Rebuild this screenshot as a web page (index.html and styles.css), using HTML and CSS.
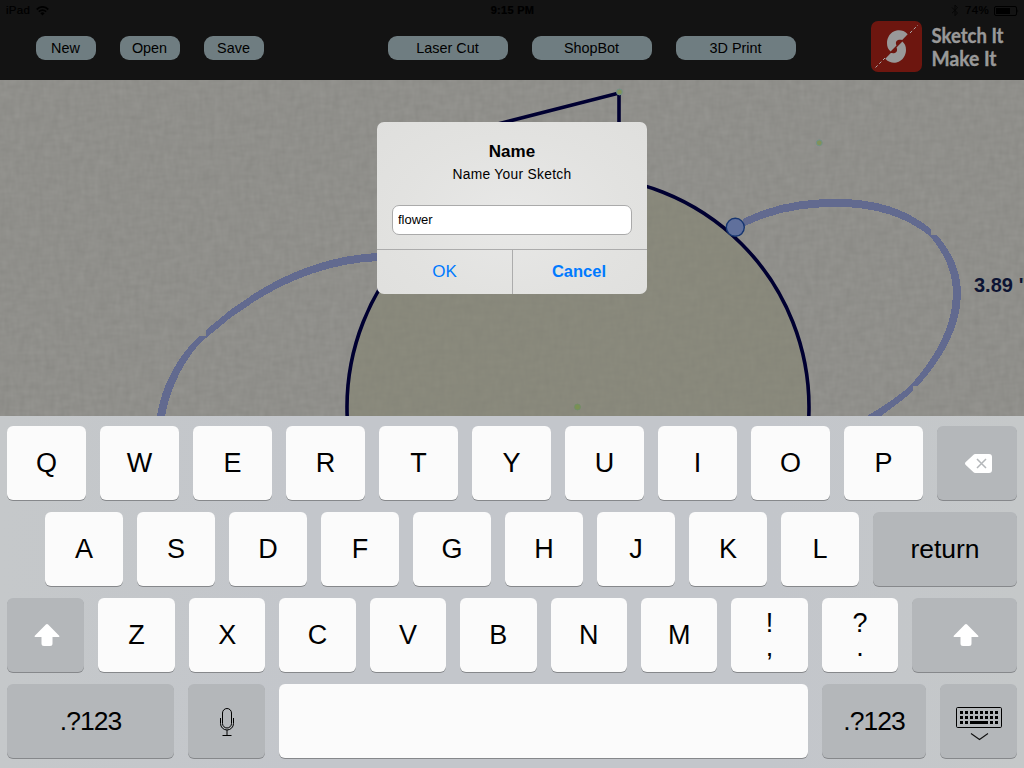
FILE: index.html
```html
<!DOCTYPE html>
<html lang="en">
<head>
<meta charset="utf-8">
<title>Sketch It Make It</title>
<link rel="stylesheet" href="styles.css">
</head>
<body>
<div class="screen">
  <header class="header">
    <div class="status">
      <div class="status-left"><span>iPad</span>
        <svg width="13" height="10" viewBox="0 0 13 10" fill="none" stroke="#000" stroke-width="1.7"><path d="M.7 3.5Q6.5-1.8 12.3 3.5M2.8 5.7Q6.5 2.5 10.2 5.7"/><path d="M4.4 7.2Q6.5 5.5 8.6 7.2L6.5 9.5z" fill="#000" stroke="none"/></svg>
      </div>
      <div class="status-time">9:15 PM</div>
      <div class="status-right">
        <svg width="8" height="13" viewBox="0 0 8 13" fill="none" stroke="#060606"><path d="M1 3.5 6.5 9 4 11.7V1L6.5 3.8 1 9.2"/></svg>
        <span>74%</span>
        <svg width="25" height="10" viewBox="0 0 25 10"><rect x=".5" y=".5" width="22" height="9" rx="1.5" fill="none" stroke="#000"/><rect x="2" y="2" width="14" height="6" fill="#000"/><path d="M23.5 3Q25 5 23.5 7z"/></svg>
      </div>
    </div>
    <div class="toolbar">
      <nav class="group files"><button class="pill">New</button><button class="pill">Open</button><button class="pill">Save</button></nav>
      <nav class="group outputs"><button class="pill wide">Laser Cut</button><button class="pill wide">ShopBot</button><button class="pill wide">3D Print</button></nav>
      <svg class="brand" width="140" height="52" viewBox="0 0 140 52">
        <rect width="51" height="51" rx="7" fill="#6d160f"/>
        <path d="M36.7 13.3C33 9.3 29 9 25.5 9.6C19 11 16 17 16 22C16 26 17.2 28.3 19.6 30.4L25.5 24.5C24.2 21.5 25.2 19.3 28 18.8C29.2 18.6 30.2 18.9 31.2 18.9z" fill="#999"/>
        <path d="M14.3 37.7C18 41.7 22 42 25.5 41.4C32 40 35 34 35 29C35 25 33.8 22.7 31.4 20.6L25.5 26.5C26.8 29.5 25.8 31.7 23 32.2C21.8 32.4 20.8 32.1 19.8 32.1z" fill="#999"/>
        <path d="M4.5 46.5 14 37M39 12 47 4" stroke="#aaa" stroke-width="1" stroke-dasharray="3 2.3"/>
        <text class="brand-text" x="60.5" y="22" textLength="72" lengthAdjust="spacingAndGlyphs">Sketch It</text>
        <text class="brand-text" x="60.5" y="44.5" textLength="65" lengthAdjust="spacingAndGlyphs">Make It</text>
      </svg>
    </div>
  </header>

  <main class="canvas">
    <svg class="drawing" width="1024" height="336" viewBox="0 80 1024 336">
      <defs>
        <filter id="linen" x="0" y="0" width="100%" height="100%" color-interpolation-filters="sRGB">
          <feTurbulence type="fractalNoise" baseFrequency=".07 .2" numOctaves="2" seed="4" result="a"/>
          <feColorMatrix in="a" values=".07 0 0 0 .527  .07 0 0 0 .525  .07 0 0 0 .508  0 0 0 0 1" result="weft"/>
          <feTurbulence type="fractalNoise" baseFrequency=".2 .07" numOctaves="2" seed="9" result="b"/>
          <feColorMatrix in="b" values=".07 0 0 0 .527  .07 0 0 0 .525  .07 0 0 0 .508  0 0 0 0 1" result="warp"/>
          <feComposite in="weft" in2="warp" operator="arithmetic" k2=".5" k3=".5"/>
        </filter>
      </defs>
      <rect y="80" width="1024" height="336" filter="url(#linen)"/>
      <circle cx="578" cy="407" r="231" fill="#84836f" fill-opacity=".55"/>
      <g fill="#626a8f" shape-rendering="crispEdges">
        <path d="M743 219C775 203 805 199 837 199C875 199 905 208 931 229V237C905 216 875 207 837 207C805 207 775 211 743 227z"/>
        <path d="M929 235H937C954 254 961 275 961 293C961 325 944 357 918 386H910C936 357 953 325 953 293C953 275 946 254 929 235z"/>
        <path d="M913 383V391C903 400 893 407 881 416H867C886 405 903 393 913 383z"/>
        <path d="M378 253C311 256 253 288 206 330V338C253 296 311 264 378 261z"/>
        <path d="M199 336H207C184 358 170 388 165 416H157C161 388 176 358 199 336z"/>
      </g>
      <g fill="none" stroke="#000031" stroke-width="3.6">
        <circle cx="578" cy="407" r="231"/>
        <path d="M490 126 619 93V180"/>
      </g>
      <circle cx="735.3" cy="227.3" r="9" fill="#60709c" stroke="#173670" stroke-width="1.4"/>
      <g fill="#81925a" stroke="#71928a" stroke-width="1"><circle cx="619.5" cy="92" r="2.9"/><circle cx="819.3" cy="142.8" r="2.9"/><circle cx="577.5" cy="407" r="2.9" fill="#7b9052" stroke="#718e68"/></g>
      <text class="measure" x="974" y="292">3.89 "</text>
    </svg>
    <section class="alert">
      <div class="alert-body">
        <h1 class="alert-title">Name</h1>
        <p class="alert-message">Name Your Sketch</p>
        <input class="alert-input" type="text" value="flower">
      </div>
      <div class="alert-actions"><button class="action">OK</button><button class="action strong">Cancel</button></div>
    </section>
  </main>

  <section class="keyboard">
    <div class="row row-1">
      <button class="key">Q</button><button class="key">W</button><button class="key">E</button><button class="key">R</button><button class="key">T</button><button class="key">Y</button><button class="key">U</button><button class="key">I</button><button class="key">O</button><button class="key">P</button>
      <button class="key dark"><svg class="icon-delete" width="27" height="19" viewBox="0 0 27 19"><path d="M8 1.2Q9 0 10.5 0H24Q27 0 27 3V16Q27 19 24 19H10.5Q9 19 8 17.8L.5 10.7Q-.5 9.5 .5 8.3z" fill="#fff"/><path d="M12 5 21 14M21 5 12 14" stroke="#b4b7ba" stroke-width="1.5"/></svg></button>
    </div>
    <div class="row row-2">
      <button class="key">A</button><button class="key">S</button><button class="key">D</button><button class="key">F</button><button class="key">G</button><button class="key">H</button><button class="key">J</button><button class="key">K</button><button class="key">L</button>
      <button class="key dark">return</button>
    </div>
    <div class="row row-3">
      <button class="key dark"><svg class="icon-shift" width="26" height="22" viewBox="0 0 26 22"><path d="M11.9.6Q13-.4 14.1.6L25.2 11.8Q25.8 13 24.5 13H18.5V19.5Q18.5 22 16 22H10Q7.5 22 7.5 19.5V13H1.5Q.2 13 .8 11.8z" fill="#fff"/></svg></button>
      <button class="key">Z</button><button class="key">X</button><button class="key">C</button><button class="key">V</button><button class="key">B</button><button class="key">N</button><button class="key">M</button>
      <button class="key double"><span>!</span><span>,</span></button><button class="key double"><span>?</span><span>.</span></button>
      <button class="key dark"><svg class="icon-shift" width="26" height="22" viewBox="0 0 26 22"><path d="M11.9.6Q13-.4 14.1.6L25.2 11.8Q25.8 13 24.5 13H18.5V19.5Q18.5 22 16 22H10Q7.5 22 7.5 19.5V13H1.5Q.2 13 .8 11.8z" fill="#fff"/></svg></button>
    </div>
    <div class="row row-4">
      <button class="key dark digits">.?123</button>
      <button class="key dark"><svg class="icon-mic" width="14" height="28" viewBox="0 0 14 28" fill="none" stroke="#000"><rect x="2.5" y=".5" width="9" height="19.5" rx="4.5"/><path d="M.5 10V15.5A6.5 6.5 0 0 0 13.5 15.5V10M7 22V27.5M2.5 27.5H11.5"/></svg></button>
      <button class="key space" aria-label="space"></button>
      <button class="key dark digits">.?123</button>
      <button class="key dark"><svg class="icon-hide" width="46" height="34" viewBox="0 0 46 34"><rect x=".5" y=".5" width="45" height="20" rx="1.2" fill="none" stroke="#000"/><path d="M4 5.5H42M4 10.5H42" stroke="#000" stroke-width="3" stroke-dasharray="3 2"/><path d="M4 15.5H7M9 15.5H12M14 15.5H32M34 15.5H37M39 15.5H42" stroke="#000" stroke-width="3"/><path d="M15 26.5 23.5 32.5 32 26.5" fill="none" stroke="#111" stroke-width="1.1"/></svg></button>
    </div>
  </section>
</div>
</body>
</html>
```
FILE: styles.css
```css
* { box-sizing: border-box; }
body { margin: 0; font-family: "Liberation Sans", Arial, sans-serif; color: #000; }
button, input { font: inherit; color: inherit; border: 0; margin: 0; padding: 0; }
svg { display: block; flex: none; }
.screen { width: 1024px; height: 768px; display: flex; flex-direction: column; overflow: hidden; }

.header { height: 80px; background: #131313; display: flex; flex-direction: column; }
.status { height: 21px; padding: 0 5px 0 6px; display: grid; grid-template-columns: 1fr auto 1fr; align-items: center; font-size: 11.5px; line-height: 21px; -webkit-text-stroke: .2px #000; letter-spacing: .3px; }
.status-left { display: flex; align-items: center; gap: 6px; }
.status-time { font-weight: bold; font-size: 11px; }
.status-right { display: flex; align-items: center; justify-content: flex-end; gap: 6px; }
.status-right span { margin-right: -1px; }
.toolbar { height: 59px; display: flex; align-items: flex-start; }
.group { display: flex; gap: 24px; padding-top: 15px; }
.files { margin-left: 36px; }
.outputs { margin-left: 124px; }
.pill { width: 60px; height: 24px; padding-right: 1px; border-radius: 9px; background: #6f7d81; font-size: 14.4px; line-height: 23px; }
.pill.wide { width: 120px; }
.brand { margin-left: 75px; overflow: visible; }
.brand-text { font: bold 21.5px Lato, sans-serif; fill: #999; stroke: #999; stroke-width: .4px; }

.canvas { position: relative; height: 336px; background: #8f8f8a; }
.measure { font: bold 20px "Liberation Sans", Arial, sans-serif; fill: #0d1433; }

.alert { position: absolute; left: 377px; top: 42px; width: 270px; height: 172px; border-radius: 7px; overflow: hidden; background: radial-gradient(ellipse at 50% 55%, #e8e8e7, #e2e2e0 60%, #dfdfdd); display: flex; flex-direction: column; }
.alert-body { height: 127px; padding: 20px 15px 0; text-align: center; }
.alert-title { margin: 0; font-size: 17px; line-height: 20px; }
.alert-message { margin: 4px 0 0; font-size: 13.8px; line-height: 17px; letter-spacing: .3px; }
.alert-input { display: block; width: 240px; height: 30px; margin-top: 22px; padding: 0 5px 2px; border: 1px solid #aaa; border-radius: 7px; background: #fff; font-size: 13px; }
.alert-actions { height: 45px; display: grid; grid-template-columns: 135px 135px; border-top: 1px solid #acacac; }
.action { background: none; color: #007aff; font-size: 17px; padding-bottom: 1px; }
.action.strong { font-weight: bold; border-left: 1px solid #acacac; font-size: 16.5px; padding-right: 2px; }

.keyboard { height: 352px; padding: 10px 7px; display: flex; flex-direction: column; gap: 12px; background: linear-gradient(90deg, #c5c8ca, #c3c6cb 30%, #c3c6cb 75%, #c5c8c9); }
.row { display: grid; gap: 14px; height: 74px; }
.row-1 { grid-template-columns: repeat(10, 79px) 80px; }
.row-2 { grid-template-columns: repeat(9, 78px) 144px; padding-left: 38px; }
.row-3 { grid-template-columns: 77px 77px repeat(8, 76.4px) 104.8px; }
.row-4 { grid-template-columns: 167px 77px 529px 104px 77px; }
.key { display: flex; align-items: center; justify-content: center; border-radius: 6px; background: #fbfbfb; box-shadow: 0 1px 0 #86888b; font-size: 27px; line-height: 30px; padding-bottom: 1px; }
.key.dark { background: #b4b7ba; font-size: 26.5px; }
.key.digits { letter-spacing: -1px; }
.key.double { flex-direction: column; justify-content: flex-start; line-height: 26px; padding: 12px 0 0; }
.key.double span + span { margin-top: -2px; }
.icon-delete { margin: 2px 0 0 2px; }
.icon-shift { margin-left: 2px; }
.icon-mic { margin-top: 3px; }
.icon-hide { margin: 6px 0 0 1px; }
```
